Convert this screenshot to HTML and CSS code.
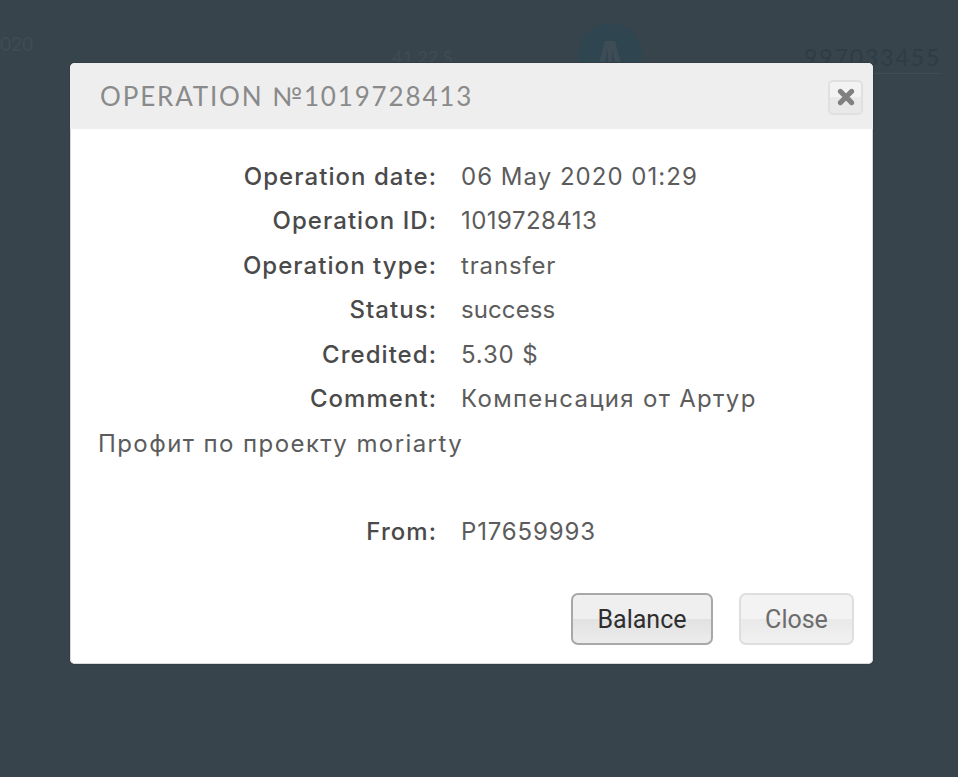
FILE: index.html
```html
<!DOCTYPE html>
<html lang="en">
<head>
<meta charset="utf-8">
<title>Operation</title>
<link rel="stylesheet" href="styles.css">
</head>
<body>
<div class="backdrop">
  <span class="bg-date">020</span>
  <span class="bg-sum">41.22 $</span>
  <span class="bg-logo"><svg viewBox="0 0 64 64" width="64" height="64"><path d="M20 44 L27 18 H37 L44 44 H38 L34 26 V44 H30 V26 L26 44 Z" fill="#3e4c56"/></svg></span>
  <span class="bg-id">997033455</span>
</div>
<section class="modal">
  <header class="modal-head">
    <h1 class="modal-title">OPERATION №1019728413</h1>
    <button class="x-btn" aria-label="Close"><svg viewBox="0 0 16 16" width="18" height="18"><path d="M3 3 L13 13 M13 3 L3 13" stroke="#808080" stroke-width="4.4" stroke-linecap="round"/></svg></button>
  </header>
  <div class="modal-body">
    <div class="row"><span class="label">Operation date:</span><span class="value wide">06 May 2020 01:29</span></div>
    <div class="row"><span class="label">Operation ID:</span><span class="value tight">1019728413</span></div>
    <div class="row"><span class="label">Operation type:</span><span class="value">transfer</span></div>
    <div class="row"><span class="label">Status:</span><span class="value tighter">success</span></div>
    <div class="row"><span class="label">Credited:</span><span class="value">5.30 $</span></div>
    <div class="row"><span class="label">Comment:</span><span class="value cyr">Компенсация от Артур</span></div>
    <p class="note cyr">Профит по проекту moriarty</p>
    <div class="row from"><span class="label">From:</span><span class="value">P17659993</span></div>
  </div>
  <footer class="modal-foot">
    <button class="btn btn-primary">Balance</button>
    <button class="btn btn-muted">Close</button>
  </footer>
</section>
</body>
</html>
```
FILE: styles.css
```css
* { box-sizing: border-box; }
html, body { margin: 0; height: 100%; }
body {
  width: 958px;
  height: 777px;
  overflow: hidden;
  background: #37444c;
  position: relative;
  font-family: "Inter", sans-serif;
}
.backdrop { height: 100px; position: relative; font-family: "Lato", sans-serif; }
.bg-date { position: absolute; left: 0; top: 32px; font-size: 19px; color: #3f4c54; }
.bg-sum { position: absolute; left: 392px; top: 46px; font-size: 18px; color: #3f4c54; }
.bg-logo { position: absolute; left: 578px; top: 23px; width: 64px; height: 64px; border-radius: 50%; background: #2f4651; }
.bg-id { position: absolute; left: 804px; top: 43px; font-size: 23px; letter-spacing: 1.9px; padding-bottom: 2px; color: #2f3c44; border-bottom: 1px solid #414e56; }
.modal {
  position: absolute;
  left: 70px;
  top: 63px;
  width: 803px;
  height: 601px;
  background: #fff;
  border-radius: 5px;
  overflow: hidden;
  display: flex;
  flex-direction: column;
  box-shadow: 0 0 0 1px #323e46, inset 0 0 0 1px #d9d9d9;
}
.modal-head {
  height: 66px;
  background: #eeeeee;
  display: flex;
  align-items: center;
  justify-content: space-between;
  padding: 0 10px 0 30px;
}
.modal-title {
  margin: 0;
  font-family: "Lato", sans-serif;
  font-weight: 400;
  font-size: 26px;
  letter-spacing: 1.85px;
  color: #8a8a8a;
}
.x-btn {
  width: 35px;
  height: 35px;
  margin-top: 2px;
  padding: 0;
  border: 2px solid #e0e0e0;
  border-radius: 5px;
  background: linear-gradient(#f3f3f3 50%, #e9e9e9 50%);
  display: flex;
  align-items: center;
  justify-content: center;
}
.modal-body { padding-top: 25.4px; flex: 1; }
.row { display: flex; height: 44.4px; align-items: center; font-size: 24px; }
.label { width: 367px; text-align: right; font-weight: 500; color: #4a4a4a; font-size: 24px; letter-spacing: 1.05px; }
.value { margin-left: 24px; color: #5c5c5c; font-size: 24px; letter-spacing: 0.85px; font-weight: 400; }
.value.wide { letter-spacing: 1.02px; }
.value.tight { letter-spacing: 0.45px; }
.value.tighter { letter-spacing: 0.1px; }
.note { margin: 0 0 0 28px; height: 88.8px; line-height: 46px; font-size: 24px; color: #5c5c5c; }
.cyr { letter-spacing: 1.42px; }
.value.cyr { letter-spacing: 1.3px; }
.modal-foot {
  display: flex;
  justify-content: flex-end;
  gap: 26px;
  padding: 0 19px 19px 0;
}
.btn {
  height: 52px;
  font-family: "Roboto", sans-serif;
  font-size: 25px;
  border-radius: 7px;
  padding: 0;
  background: linear-gradient(#efefef 50%, #e2e2e2 50%, #ececec);
}
.btn-primary { width: 142px; border: 2px solid #a8a8a8; color: #2e2e2e; }
.btn-muted { width: 115px; border: 2px solid #dedede; color: #6c6c6c; background: linear-gradient(#f3f3f3 50%, #e9e9e9 50%, #f1f1f1); }
```
